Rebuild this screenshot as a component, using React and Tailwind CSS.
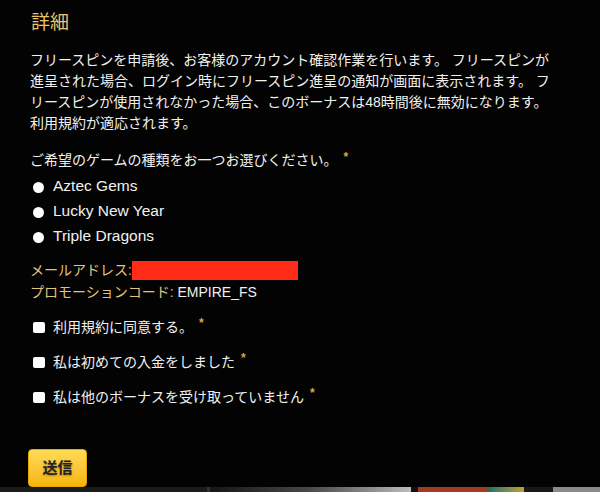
const games = ['Aztec Gems', 'Lucky New Year', 'Triple Dragons'];

const agreements = [
  '利用規約に同意する。',
  '私は初めての入金をしました',
  '私は他のボーナスを受け取っていません',
];

const Required = () => (
  <span className="ml-[6px] relative top-[-4px] text-[12px] font-bold leading-none text-[#dba54c]">*</span>
);

export default function App() {
  return (
    <div
      className="w-[600px] h-[492px] bg-[#030303] overflow-hidden flex flex-col text-[#f1f1f1]"
      style={{ fontFamily: '"Liberation Sans", "Noto Sans CJK JP", sans-serif' }}
    >
      <div className="pl-[30px] pr-[40px] flex flex-col">
        {/* 見出し */}
        <h2 className="pt-[10px] text-[19px] leading-[25px] text-[#e9c46e] pl-[1px]">詳細</h2>

        {/* 説明文 */}
        <p className="mt-[15px] w-[526px] text-[14px] leading-[21px]">
          フリースピンを申請後、お客様のアカウント確認作業を行います。 フリースピンが進呈された場合、ログイン時にフリースピン進呈の通知が画面に表示されます。 フリースピンが使用されなかった場合、このボーナスは48時間後に無効になります。利用規約が適応されます。
        </p>

        {/* ゲーム選択 */}
        <p className="mt-[16px] text-[14px] leading-[21px]">
          ご希望のゲームの種類をお一つお選びください。
          <Required />
        </p>
        <div className="mt-[2px] flex flex-col">
          {games.map((game) => (
            <label key={game} className="h-[25px] flex items-center">
              <span className="ml-[3px] mt-[3px] w-[11px] h-[11px] rounded-full bg-white" />
              <span className="ml-[9px] text-[15.5px] leading-[25px]">{game}</span>
            </label>
          ))}
        </div>

        {/* アカウント情報 */}
        <div className="mt-[11px] text-[14px] leading-[22px]">
          <div className="flex items-center">
            <span className="text-[#e3c27a]">メールアドレス:</span>
            <span className="w-[166px] h-[19px] bg-[#ff2b17]" />
          </div>
          <div>
            <span className="text-[#e3c27a]">プロモーションコード:</span> EMPIRE_FS
          </div>
        </div>

        {/* 同意事項 */}
        <div className="mt-[13px] flex flex-col gap-[13px]">
          {agreements.map((text) => (
            <label key={text} className="h-[22px] flex items-center text-[14px] leading-[22px]">
              <span className="ml-[3px] w-[12px] h-[11px] rounded-[2px] bg-white" />
              <span className="ml-[8px]">{text}</span>
              <Required />
            </label>
          ))}
        </div>

        {/* 送信ボタン */}
        <div className="mt-[41px]">
          <button className="-ml-[2px] w-[59px] h-[38px] rounded-[4px] border border-[#e6a800] bg-gradient-to-b from-[#ffdb55] to-[#f6b500] text-[15px] font-bold text-[#222222] [text-shadow:0_1px_2px_rgba(0,0,0,0.35)]">
            送信
          </button>
        </div>
      </div>

      {/* 下部のサムネイル帯 */}
      <div className="mt-auto h-[5px] flex">
        <div className="w-[207px] bg-[#1b1b1b]" />
        <div className="w-[3px] bg-[#333333]" />
        <div className="w-[201px] bg-gradient-to-r from-[#161616] via-[#4a4a4a] to-[#bdbdbd]" />
        <div className="w-[7px] bg-[#101010]" />
        <div className="w-[70px] bg-[#a53a22]" />
        <div className="w-[36px] bg-gradient-to-r from-[#1f6f5f] to-[#b9a236]" />
        <div className="w-[29px] bg-[#181818]" />
        <div className="flex-1 bg-[#8a8a8a]" />
      </div>
    </div>
  );
}
